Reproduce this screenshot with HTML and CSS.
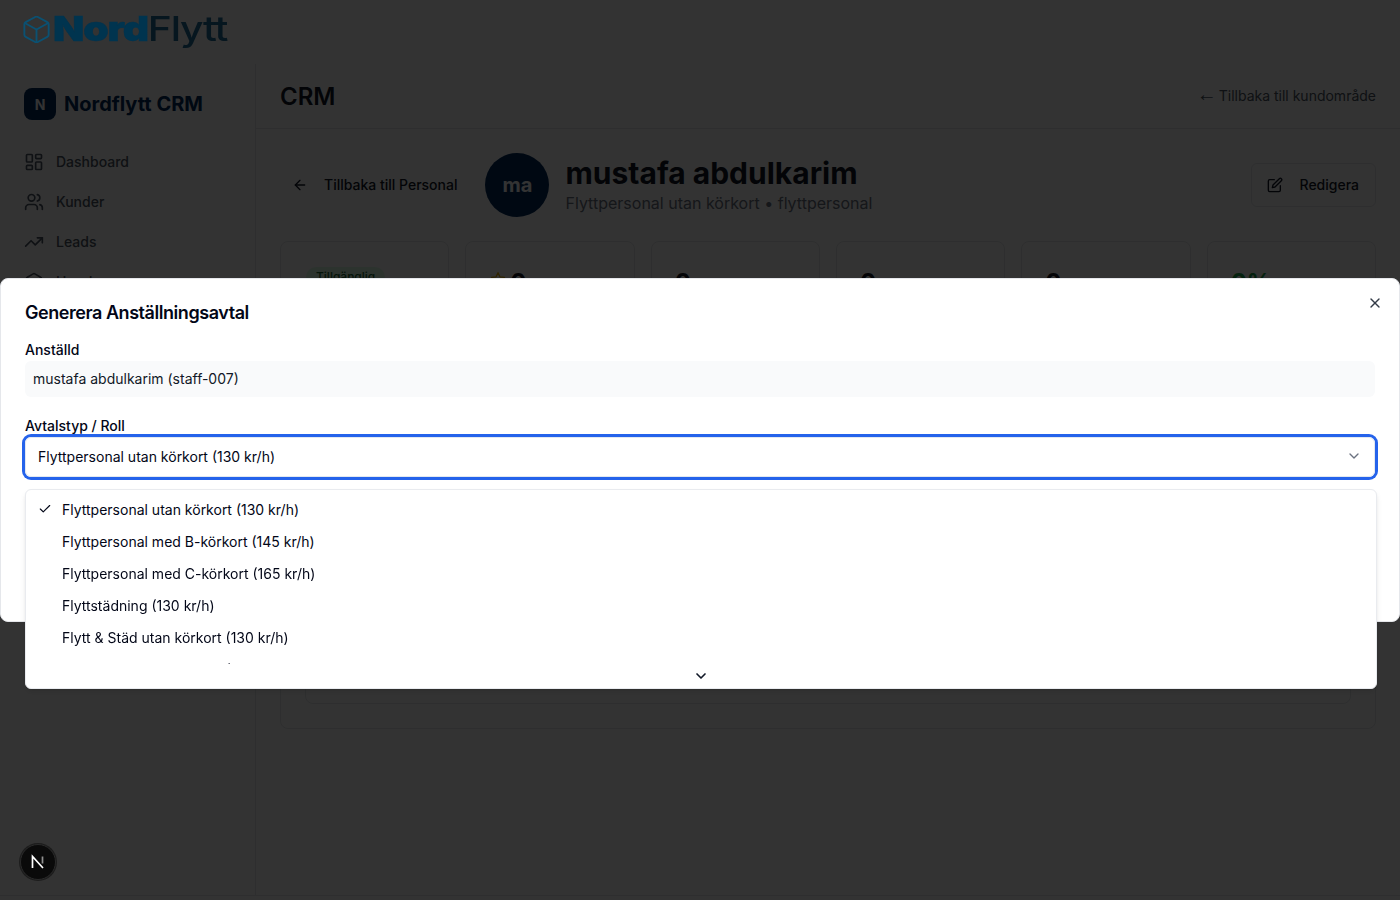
FILE: index.html
```html
<!DOCTYPE html>
<html lang="sv">

<head>
    <meta charset="UTF-8">
    <meta name="viewport" content="width=device-width, initial-scale=1.0">
    <title>Nordflytt CRM</title>
    <link rel="stylesheet" href="styles.css">
</head>

<body>
    <header class="site-top">
        <div class="logo">
            <svg class="logo-icon" viewBox="2 1.5 20 21" preserveAspectRatio="none">
                <path d="M21 8a2 2 0 0 0-1-1.73l-7-4a2 2 0 0 0-2 0l-7 4A2 2 0 0 0 3 8v8a2 2 0 0 0 1 1.73l7 4a2 2 0 0 0 2 0l7-4A2 2 0 0 0 21 16Z" />
                <path d="m3.3 7 8.7 5 8.7-5" />
                <path d="M12 22V12" />
            </svg>
            <span class="logo-text"><b>Nord</b>Flytt</span>
        </div>
    </header>

    <div class="shell">
        <aside class="sidebar">
            <div class="brand">
                <div class="brand-mark">N</div>
                <span class="brand-name">Nordflytt CRM</span>
            </div>
            <nav class="nav">
                <a class="nav-item">
                    <svg class="icon-20" viewBox="0 0 24 24">
                        <rect x="3" y="3" width="7" height="9" rx="1" />
                        <rect x="14" y="3" width="7" height="5" rx="1" />
                        <rect x="14" y="12" width="7" height="9" rx="1" />
                        <rect x="3" y="16" width="7" height="5" rx="1" />
                    </svg>
                    <span class="nudge">Dashboard</span>
                </a>
                <a class="nav-item">
                    <svg class="icon-20" viewBox="0 0 24 24">
                        <path d="M16 21v-2a4 4 0 0 0-4-4H6a4 4 0 0 0-4 4v2" />
                        <circle cx="9" cy="7" r="4" />
                        <path d="M22 21v-2a4 4 0 0 0-3-3.87" />
                        <path d="M16 3.13a4 4 0 0 1 0 7.75" />
                    </svg>
                    <span class="nudge">Kunder</span>
                </a>
                <a class="nav-item">
                    <svg class="icon-20" viewBox="0 0 24 24">
                        <polyline points="22 7 13.5 15.5 8.5 10.5 2 17" />
                        <polyline points="16 7 22 7 22 13" />
                    </svg>
                    <span class="nudge">Leads</span>
                </a>
                <a class="nav-item">
                    <svg class="icon-20" viewBox="0 0 24 24">
                        <path d="M21 8a2 2 0 0 0-1-1.73l-7-4a2 2 0 0 0-2 0l-7 4A2 2 0 0 0 3 8v8a2 2 0 0 0 1 1.73l7 4a2 2 0 0 0 2 0l7-4A2 2 0 0 0 21 16Z" />
                        <path d="m3.3 7 8.7 5 8.7-5" />
                        <path d="M12 22V12" />
                    </svg>
                    <span class="nudge">Uppdrag</span>
                </a>
            </nav>
        </aside>

        <main class="main">
            <div class="main-head">
                <h1 class="page-title">CRM</h1>
                <a class="back-customer nudge"><span class="long-arrow">←</span> Tillbaka till kundområde</a>
            </div>

            <div class="content">
                <section class="profile">
                    <a class="btn-back">
                        <svg class="icon-16" viewBox="0 0 24 24">
                            <path d="m12 19-7-7 7-7" />
                            <path d="M19 12H5" />
                        </svg>
                        <span class="nudge">Tillbaka till Personal</span>
                    </a>
                    <div class="avatar">ma</div>
                    <div class="profile-info">
                        <h2 class="profile-name">mustafa abdulkarim</h2>
                        <p class="profile-sub">Flyttpersonal utan körkort • flyttpersonal</p>
                    </div>
                    <a class="btn-edit">
                        <svg class="icon-16" viewBox="0 0 24 24">
                            <path d="M11 4H4a2 2 0 0 0-2 2v14a2 2 0 0 0 2 2h14a2 2 0 0 0 2-2v-7" />
                            <path d="M18.5 2.5a2.121 2.121 0 0 1 3 3L12 15l-4 1 1-4 9.5-9.5z" />
                        </svg>
                        <span class="nudge">Redigera</span>
                    </a>
                </section>

                <section class="stats">
                    <div class="stat"><span class="pill">Tillgänglig</span></div>
                    <div class="stat">
                        <div class="stat-value">
                            <svg class="star" viewBox="0 0 24 24">
                                <path d="M12 2.5l2.9 6.2 6.8.8-5 4.6 1.3 6.7-6-3.4-6 3.4 1.3-6.7-5-4.6 6.8-.8Z" />
                            </svg>
                            0
                        </div>
                    </div>
                    <div class="stat">
                        <div class="stat-value">0</div>
                    </div>
                    <div class="stat">
                        <div class="stat-value">0</div>
                    </div>
                    <div class="stat">
                        <div class="stat-value">0</div>
                    </div>
                    <div class="stat">
                        <div class="stat-value green">0%</div>
                    </div>
                </section>

                <section class="panel">
                    <div class="panel-inner"></div>
                </section>
            </div>
        </main>
    </div>

    <div class="overlay"></div>

    <div class="dev-badge">
        <svg class="dev-n" viewBox="0 0 16 16">
            <path d="M2.5 14V2.5L13 14" />
            <path class="dev-n-fade" d="M12.5 2.5V9.5" />
        </svg>
    </div>

    <div class="dialog">
        <h3 class="dialog-title">Generera Anställningsavtal</h3>
        <svg class="dialog-close" viewBox="0 0 24 24">
            <path d="M18 6 6 18" />
            <path d="m6 6 12 12" />
        </svg>

        <label class="field-label">Anställd</label>
        <div class="readonly">mustafa abdulkarim (staff-007)</div>

        <label class="field-label second">Avtalstyp / Roll</label>
        <div class="select-wrap">
            <div class="select">
                <span>Flyttpersonal utan körkort (130 kr/h)</span>
                <svg class="select-chev" viewBox="0 0 24 24">
                    <path d="m6 9 6 6 6-6" />
                </svg>
            </div>

            <div class="dropdown">
                <div class="options">
                    <div class="option">
                        <svg class="option-check" viewBox="0 0 24 24">
                            <path d="M20 6 9 17l-5-5" />
                        </svg>
                        Flyttpersonal utan körkort (130 kr/h)
                    </div>
                    <div class="option">Flyttpersonal med B-körkort (145 kr/h)</div>
                    <div class="option">Flyttpersonal med C-körkort (165 kr/h)</div>
                    <div class="option">Flyttstädning (130 kr/h)</div>
                    <div class="option">Flytt &amp; Städ utan körkort (130 kr/h)</div>
                    <div class="option">Flytt &amp; Städ med körkort (145 kr/h)</div>
                </div>
                <div class="scroll-down">
                    <svg viewBox="0 0 24 24">
                        <path d="m6 9 6 6 6-6" />
                    </svg>
                </div>
            </div>
        </div>
    </div>
</body>

</html>
```

FILE: styles.css
```css
* {
    box-sizing: border-box;
}

body {
    margin: 0;
    height: 900px;
    overflow: hidden;
    background-color: #ffffff;
    color: #111827;
    font-family: Inter, "Liberation Sans", sans-serif;
    font-size: 14px;
}

svg {
    fill: none;
    stroke: currentColor;
    stroke-width: 2;
    stroke-linecap: round;
    stroke-linejoin: round;
}

.icon-20 {
    width: 20px;
    height: 20px;
    flex-shrink: 0;
}

.icon-16 {
    width: 16px;
    height: 16px;
    flex-shrink: 0;
}

/* text sits a pixel higher in these rows */
.nudge {
    padding-bottom: 2px;
}

/* top logo */
.site-top {
    height: 64px;
    padding-left: 24px;
    display: flex;
    align-items: center;
}

.logo {
    display: flex;
    align-items: center;
    gap: 3px;
    position: relative;
    z-index: 20;
    margin-top: -6px;
    margin-left: -1px;
}

.logo-icon {
    width: 27px;
    height: 27px;
    color: #0b5172;
    stroke-width: 1.4;
}

.logo-text {
    font-size: 34px;
    line-height: 40px;
    letter-spacing: -1px;
    color: #06161f;
    font-weight: 500;
    transform: scaleX(1.2);
    transform-origin: left center;
}

.logo-text b {
    font-weight: 900;
    color: #00344f;
    -webkit-text-stroke: 0.5px #00344f;
}

/* page under the overlay */
.shell {
    display: flex;
    height: 832px;
    border-bottom: 1px solid #e5e7eb;
}

.sidebar {
    width: 256px;
    flex-shrink: 0;
    border-right: 1px solid #e5e7eb;
    padding: 24px;
}

.brand {
    display: flex;
    align-items: center;
    gap: 8px;
    margin-bottom: 22px;
}

.brand-mark {
    width: 32px;
    height: 32px;
    border-radius: 8px;
    background-color: #002a5c;
    color: #ffffff;
    font-weight: 700;
    display: flex;
    align-items: center;
    justify-content: center;
}

.brand-name {
    font-size: 20px;
    font-weight: 700;
    color: #002a5c;
}

.nav-item {
    height: 40px;
    display: flex;
    align-items: center;
    gap: 12px;
    color: #4b5563;
    font-weight: 500;
}

.main {
    flex: 1;
    min-width: 0;
}

.main-head {
    height: 65px;
    padding: 0 24px;
    border-bottom: 1px solid #e5e7eb;
    display: flex;
    align-items: center;
    justify-content: space-between;
}

.page-title {
    margin: 0;
    font-size: 24px;
    font-weight: 600;
}

.back-customer {
    color: #4b5563;
}

.long-arrow {
    font-family: "Liberation Sans", sans-serif;
    font-size: 20px;
    line-height: 0;
    margin-right: -2px;
}

.content {
    padding: 24px;
}

.profile {
    display: flex;
    align-items: center;
    gap: 16px;
}

.btn-back {
    display: flex;
    align-items: center;
    gap: 16px;
    padding: 0 12px;
    font-weight: 500;
}

.avatar {
    width: 64px;
    height: 64px;
    border-radius: 50%;
    background-color: #002a5c;
    color: #ffffff;
    font-size: 20px;
    font-weight: 700;
    display: flex;
    align-items: center;
    justify-content: center;
}

.profile-info {
    flex: 1;
}

.profile-name {
    margin: 0;
    font-size: 30px;
    line-height: 36px;
    font-weight: 700;
}

.profile-sub {
    margin: 0;
    font-size: 16px;
    line-height: 24px;
    color: #6b7280;
}

.btn-edit {
    height: 44px;
    padding: 0 16px 0 15px;
    border: 1px solid #e5e7eb;
    border-radius: 6px;
    display: flex;
    align-items: center;
    gap: 17px;
    font-weight: 500;
}

.stats {
    display: grid;
    grid-template-columns: repeat(6, 1fr);
    gap: 16px;
    margin-top: 24px;
}

.stat {
    height: 116px;
    padding: 25px 24px 24px 23px;
    border: 1px solid #e5e7eb;
    border-radius: 8px;
}

.pill {
    display: inline-block;
    margin-left: 2px;
    padding: 2px 10px;
    border-radius: 999px;
    background-color: #dcfce7;
    color: #166534;
    font-size: 12px;
    line-height: 16px;
    font-weight: 500;
}

.stat-value {
    display: flex;
    align-items: center;
    gap: 4px;
    font-size: 24px;
    line-height: 32px;
    font-weight: 700;
}

.star {
    width: 16px;
    height: 16px;
    margin-top: -8px;
    margin-left: 1px;
    color: #eab308;
}

.green {
    color: #16a34a;
}

.panel {
    height: 348px;
    margin-top: 24px;
    padding: 24px;
    border: 1px solid #e5e7eb;
    border-radius: 8px;
}

.panel-inner {
    height: 100%;
    border: 1px solid #e5e7eb;
    border-radius: 8px;
}

/* modal */
.overlay {
    position: fixed;
    inset: 0;
    z-index: 10;
    background-color: rgba(0, 0, 0, 0.8);
}

.dev-badge {
    position: fixed;
    left: 20px;
    bottom: 20px;
    z-index: 11;
    width: 36px;
    height: 36px;
    border-radius: 50%;
    background-color: #0a0a0a;
    border: 1px solid #2a2a2a;
    box-shadow: 0 0 0 1px #1c1c1c;
    display: flex;
    align-items: center;
    justify-content: center;
}

.dev-n {
    width: 16px;
    height: 16px;
    color: #ffffff;
    stroke-width: 1.7;
    stroke-linecap: butt;
    stroke-linejoin: miter;
}

.dev-n-fade {
    opacity: 0.55;
}

.dialog {
    position: fixed;
    left: 0;
    top: 278px;
    z-index: 12;
    width: 1400px;
    height: 344px;
    padding: 20px 24px;
    background-color: #ffffff;
    border: 1px solid #e5e7eb;
    border-radius: 8px;
}

.dialog-title {
    margin: 0 0 13px;
    font-size: 18px;
    line-height: 28px;
    font-weight: 600;
    letter-spacing: -0.45px;
    color: #020617;
}

.dialog-close {
    position: absolute;
    top: 16px;
    right: 16px;
    width: 16px;
    height: 16px;
    color: #333b47;
}

.field-label {
    display: block;
    line-height: 20px;
    font-weight: 500;
    color: #020617;
}

.field-label.second {
    margin-top: 19px;
}

.readonly {
    height: 36px;
    margin-top: 1px;
    padding: 0 8px 2px;
    background-color: #f9fafb;
    border-radius: 6px;
    display: flex;
    align-items: center;
}

.select-wrap {
    position: relative;
    margin-top: 1px;
}

.select {
    height: 40px;
    padding: 0 12px 2px;
    border: 1px solid #e2e8f0;
    border-radius: 6px;
    box-shadow: 0 0 0 3px #2563eb;
    display: flex;
    align-items: center;
    justify-content: space-between;
    color: #020617;
}

.select-chev {
    width: 16px;
    height: 16px;
    color: #6b7280;
}

.dropdown {
    position: absolute;
    left: 0;
    top: 52px;
    width: 1352px;
    height: 200px;
    display: flex;
    flex-direction: column;
    background-color: #ffffff;
    border: 1px solid #e9ebef;
    border-radius: 6px;
    box-shadow: 0 4px 6px -1px rgba(0, 0, 0, 0.1), 0 2px 4px -2px rgba(0, 0, 0, 0.1);
}

.options {
    height: 174px;
    padding: 3px 4px 0;
    overflow: hidden;
}

.option {
    position: relative;
    height: 32px;
    padding-left: 32px;
    display: flex;
    align-items: center;
    color: #020617;
}

.option-check {
    position: absolute;
    left: 8px;
    top: 9px;
    width: 14px;
    height: 14px;
}

.scroll-down {
    flex: 1;
    display: flex;
    align-items: center;
    justify-content: center;
}

.scroll-down svg {
    width: 16px;
    height: 16px;
    color: #111827;
    stroke-width: 2.5;
}
```
